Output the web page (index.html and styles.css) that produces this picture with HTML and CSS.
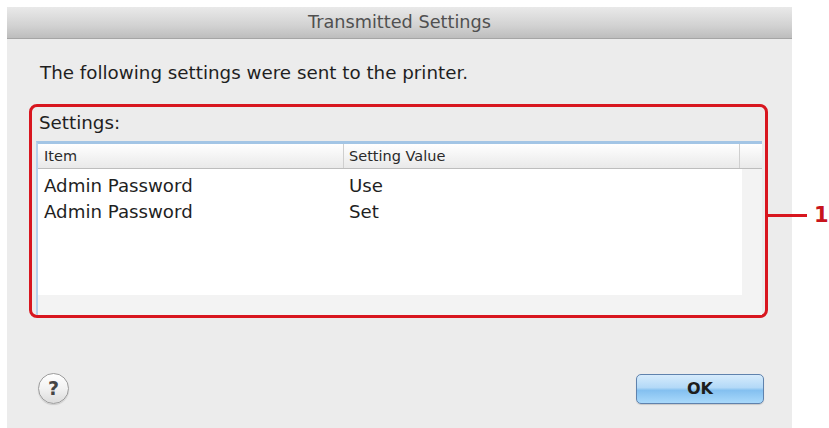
FILE: index.html
```html
<!DOCTYPE html>
<html lang="en">
<head>
<meta charset="utf-8">
<title>Transmitted Settings</title>
<link rel="stylesheet" href="styles.css">
</head>
<body>
<div class="dialog">
  <div class="titlebar">Transmitted Settings</div>
  <div class="content">
    <p class="message">The following settings were sent to the printer.</p>
    <div class="group">
      <div class="group-label">Settings:</div>
      <div class="table">
        <div class="thead">
          <div class="th th-item">Item</div>
          <div class="th th-value">Setting Value</div>
          <div class="th th-rest"></div>
        </div>
        <div class="tbody">
          <div class="row"><span class="cell">Admin Password</span><span class="cell cell-value">Use</span></div>
          <div class="row"><span class="cell">Admin Password</span><span class="cell cell-value">Set</span></div>
        </div>
      </div>
      <div class="callout"><span class="callout-line"></span><span class="callout-num">1</span></div>
    </div>
  </div>
  <div class="footer">
    <div class="help">?</div>
    <div class="ok">OK</div>
  </div>
</div>
</body>
</html>
```
FILE: styles.css
```css
html, body {
  margin: 0;
  padding: 0;
  background: #ffffff;
}

body {
  font-family: "DejaVu Sans", "Liberation Sans", sans-serif;
  color: #1f1f1f;
}

.dialog {
  margin: 7px 0 0 7px;
  width: 785px;
  height: 421px;
  background: #ececec;
  display: flex;
  flex-direction: column;
}

.titlebar {
  height: 31px;
  line-height: 31px;
  text-align: center;
  font-size: 17.7px;
  color: #505050;
  background: linear-gradient(#e9e9e9, #d2d2d2 60%, #bdbdbd);
  border-bottom: 1px solid #a5a5a5;
}

.content {
  padding: 23px 0 0 22px;
}

.message {
  margin: 0;
  font-size: 18.3px;
  line-height: 22px;
  padding-left: 11px;
}

.group {
  position: relative;
  margin-top: 20px;
  width: 739px;
  height: 214px;
  box-sizing: border-box;
  border: 3px solid #d8161f;
  border-radius: 8px;
  padding: 5px 3px 0 4px;
}

.group-label {
  font-size: 18.3px;
  line-height: 22px;
  padding-left: 3px;
  margin-bottom: 7px;
}

.table {
  width: 726px;
  height: 174px;
  box-sizing: border-box;
  border-top: 3px solid #a3c5e5;
  border-left: 2px solid #b6d1ec;
  background: #f3f3f3;
  display: flex;
  flex-direction: column;
}

.thead {
  display: flex;
  height: 24px;
  background: linear-gradient(#ffffff, #f4f4f4 50%, #e9e9e9);
  border-bottom: 1px solid #bdbdbd;
  font-size: 14.5px;
  line-height: 24px;
  color: #2a2a2a;
}

.th {
  box-sizing: border-box;
}

.th-item {
  width: 306px;
  padding-left: 6px;
  border-right: 1px solid #cfcfcf;
}

.th-value {
  width: 396px;
  padding-left: 5px;
  border-right: 1px solid #cfcfcf;
}

.th-rest {
  flex: 1;
}

.tbody {
  width: 704px;
  height: 126px;
  background: #ffffff;
  padding-top: 4px;
  box-sizing: border-box;
}

.row {
  display: flex;
  height: 26px;
  line-height: 26px;
  font-size: 18.2px;
}

.cell {
  width: 307px;
  padding-left: 6px;
  box-sizing: border-box;
}

.cell-value {
  padding-left: 4px;
  width: auto;
}

.callout {
  position: absolute;
  left: 100%;
  top: 96px;
  height: 24px;
  display: flex;
  align-items: center;
}

.callout-line {
  display: block;
  width: 42px;
  height: 3px;
  background: #d8161f;
}

.callout-num {
  margin-left: 7px;
  font-size: 21px;
  font-weight: bold;
  color: #c8141c;
  line-height: 24px;
}

.footer {
  margin-top: 55px;
  padding: 0 28px 0 31px;
  display: flex;
  justify-content: space-between;
  align-items: center;
}

.help {
  width: 31px;
  height: 31px;
  box-sizing: border-box;
  border: 1px solid #9c9c9c;
  border-radius: 50%;
  background: linear-gradient(#ffffff, #f2f2f2 50%, #dcdcdc);
  box-shadow: 0 1px 1px rgba(0, 0, 0, 0.15);
  text-align: center;
  line-height: 29px;
  font-size: 19px;
  font-weight: bold;
  color: #454545;
}

.ok {
  width: 128px;
  height: 30px;
  box-sizing: border-box;
  border: 1px solid #5f82ad;
  border-radius: 5px;
  background: linear-gradient(#d6ebfc, #b3d9f7 45%, #84c0f0 55%, #a9d9fb);
  box-shadow: 0 1px 1px rgba(0, 0, 0, 0.15);
  text-align: center;
  line-height: 28px;
  font-size: 16px;
  font-weight: bold;
  color: #1d1d1d;
}
```
